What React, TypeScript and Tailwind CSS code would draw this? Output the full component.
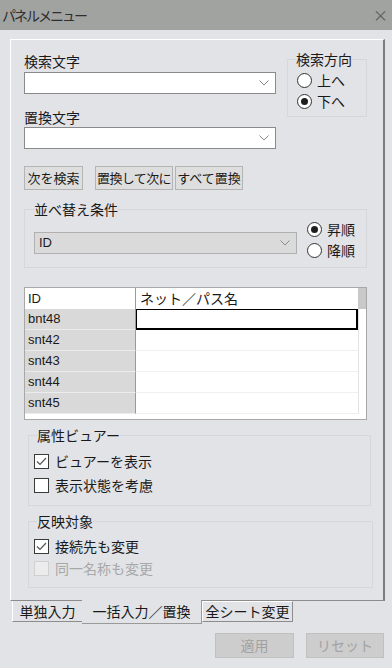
import React from "react";

const jp = "font-['Noto_Sans_CJK_JP','Noto_Sans',sans-serif]";

function Chevron() {
  return (
    <svg width="10" height="6" viewBox="0 0 10 6" className="shrink-0">
      <path d="M0.5 0.5 L5 5 L9.5 0.5" fill="none" stroke="#8a8a8a" strokeWidth="1" />
    </svg>
  );
}

function Combo({ value = "", className = "" }: { value?: string; className?: string }) {
  return (
    <div className={`flex h-[22px] items-center justify-between border pl-[4px] pr-[6px] ${className}`}>
      <span className="font-['Liberation_Sans',sans-serif] text-[13px]">{value}</span>
      <Chevron />
    </div>
  );
}

function Radio({ checked, label }: { checked?: boolean; label: string }) {
  return (
    <div className="flex h-[21px] items-center">
      <span className="flex h-[15px] w-[15px] items-center justify-center rounded-full border border-[#333] bg-white">
        {checked && <span className="h-[7px] w-[7px] rounded-full bg-[#1e1e1e]" />}
      </span>
      <span className="ml-[5px] text-[14px] text-[#1a1a1a]">{label}</span>
    </div>
  );
}

function Check({ checked, disabled, label, h }: { checked?: boolean; disabled?: boolean; label: string; h: string }) {
  return (
    <div className={`flex items-center ${h}`}>
      <span
        className={`flex h-[15px] w-[15px] items-center justify-center border ${
          disabled ? "border-[#d0d0d0] bg-[#ececec]" : "border-[#3a3a3a] bg-white"
        }`}
      >
        {checked && (
          <svg width="11" height="9" viewBox="0 0 11 9">
            <polyline points="1,4.5 4,7.5 10,1" fill="none" stroke="#555" strokeWidth="1.2" />
          </svg>
        )}
      </span>
      <span className={`ml-[6px] text-[14px] ${disabled ? "text-[#a8a8a8]" : "text-[#1a1a1a]"}`}>{label}</span>
    </div>
  );
}

const rows = ["bnt48", "snt42", "snt43", "snt44", "snt45"];

export default function App() {
  return (
    <div className={`h-[668px] w-[392px] overflow-hidden bg-[#e2e3e7] text-[#1a1a1a] ${jp}`}>
      {/* title bar */}
      <div className="flex h-[30px] items-center justify-between bg-[#a1a3a1] pl-[2px] pr-[4px]">
        <span className="text-[14px] tracking-[-2px] text-[#2e2e2e]">パネルメニュー</span>
        <span className="text-[15px] text-[#5a5a5a]">×</span>
      </div>

      {/* panel */}
      <div className="ml-[10px] mt-[9px] h-[562px] w-[375px] border-b border-l border-r-2 border-t border-b-[#8c8c8c] border-l-white border-r-[#7c7c7c] border-t-white pl-[13px]">
        <div className="flex items-start">
          <div className="w-[252px] pt-[11px]">
            <div className="h-[20px] text-[14px] leading-[20px]">検索文字</div>
            <Combo className="mt-[1px] border-[#8a8a8a] bg-white" />
            <div className="mt-[13px] h-[20px] text-[14px] leading-[20px]">置換文字</div>
            <Combo className="border-[#8a8a8a] bg-white" />
            <div className="mt-[17px] flex h-[24px] text-[13px]">
              <button className="w-[59px] border border-[#b4b4b4] bg-[#dedede]">次を検索</button>
              <button className="ml-[12px] w-[78px] border border-[#b4b4b4] bg-[#dedede] tracking-[-0.6px]">置換して次に</button>
              <button className="ml-[2px] w-[68px] border border-[#b4b4b4] bg-[#dedede]">すべて置換</button>
            </div>
          </div>
          <fieldset className="ml-[11px] mt-[9px] h-[68px] w-[80px] border border-[#d6d7db] pl-[8px]">
            <legend className="text-[14px] leading-[20px]">検索方向</legend>
            <div className="ml-[1px] pt-[1px]">
              <Radio label="上へ" />
              <Radio checked label="下へ" />
            </div>
          </fieldset>
        </div>

        <fieldset className="mt-[9px] h-[69px] w-[343px] border border-[#d6d7db] pl-[9px]">
          <legend className="text-[14px] leading-[20px]">並べ替え条件</legend>
          <div className="flex items-start">
            <Combo value="ID" className="mt-[13px] w-[263px] border-[#b0b0b0] bg-[#dadada]" />
            <div className="ml-[10px]">
              <Radio checked label="昇順" />
              <Radio label="降順" />
            </div>
          </div>
        </fieldset>

        {/* table */}
        <div className="mt-[19px] h-[133px] w-[343px] border border-[#a8a8a8] bg-white font-['Liberation_Sans',sans-serif] text-[13px]">
          <div className="flex h-[21px]">
            <div className="flex w-[111px] items-center border-r border-[#9a9a9a] pl-[3px]">ID</div>
            <div className={`flex w-[222px] items-center pl-[4px] text-[14px] ${jp}`}>ネット／パス名</div>
            <div className="w-[8px] bg-[#c9c9c9]" />
          </div>
          {rows.map((r, i) => (
            <div key={r} className="flex h-[21px]">
              <div className="flex w-[111px] items-center border-b border-r border-b-[#ececec] border-r-[#9a9a9a] bg-[#d9d9d9] pl-[3px]">
                {r}
              </div>
              {i === 0 ? (
                <div className="w-[222px] border-b-2 border-l border-r-2 border-t border-black" />
              ) : (
                <div className="w-[222px] border-b border-[#f0f0f0]" />
              )}
              <div className="w-[8px] border-l border-[#e4e4e4]" />
            </div>
          ))}
        </div>

        <fieldset className="ml-[4px] mt-[5px] h-[81px] w-[343px] border border-[#d6d7db] pl-[5px]">
          <legend className="ml-[3px] text-[14px] leading-[20px]">属性ビュアー</legend>
          <div className="pt-[4px]">
            <Check checked label="ビュアーを表示" h="h-[24px]" />
            <Check label="表示状態を考慮" h="h-[24px]" />
          </div>
        </fieldset>

        <fieldset className="ml-[4px] mt-[5px] h-[77px] w-[345px] border border-[#d6d7db] pl-[5px]">
          <legend className="ml-[3px] text-[14px] leading-[20px]">反映対象</legend>
          <div className="pt-[4px]">
            <Check checked label="接続先も変更" h="h-[22px]" />
            <Check disabled label="同一名称も変更" h="h-[22px]" />
          </div>
        </fieldset>
      </div>

      {/* tabs */}
      <div className="ml-[12px] flex items-start text-[14px]">
        <div className="flex h-[21px] w-[70px] items-center justify-center border-b border-l border-b-[#8c8c8c] border-l-white">
          単独入力
        </div>
        <div className="relative -mt-[1px] flex h-[24px] w-[120px] items-center justify-center border-b border-r border-[#9a9a9a] bg-[#e2e3e7]">
          一括入力／置換
        </div>
        <div className="flex h-[21px] w-[91px] items-center justify-center border-b border-l border-r border-t border-b-[#8c8c8c] border-l-white border-r-[#8c8c8c] border-t-white">
          全シート変更
        </div>
      </div>

      <div className="mt-[9px] flex justify-end gap-[12px] pr-[8px] text-[14px]">
        <button className="h-[25px] w-[79px] border border-[#c0c0c0] bg-[#cdcdcd] text-[#a2a2a2]">適用</button>
        <button className="h-[25px] w-[78px] border border-[#c0c0c0] bg-[#cdcdcd] text-[#a2a2a2]">リセット</button>
      </div>
    </div>
  );
}
